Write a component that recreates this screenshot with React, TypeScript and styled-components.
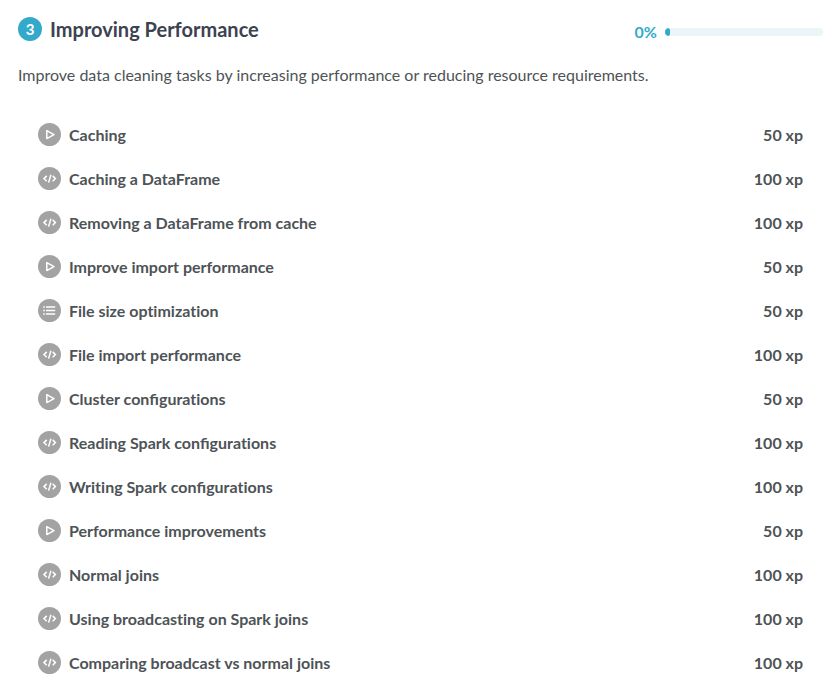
import React from "react";
import styled, { createGlobalStyle } from "styled-components";

const GlobalStyle = createGlobalStyle`
  * { box-sizing: border-box; }
  body { margin: 0; background: #fff; color: #4d5356; font-family: Lato, sans-serif; font-size: 16px; }
`;

const Chapter = styled.main`
  padding: 15px 16px 0 18px;
`;

const Header = styled.header`
  display: flex;
  justify-content: space-between;
  align-items: center;
  height: 28px;
`;

const Heading = styled.div`
  display: flex;
  align-items: center;
  gap: 8px;
`;

const ChapterNumber = styled.span`
  display: flex;
  align-items: center;
  justify-content: center;
  width: 24px;
  height: 24px;
  border-radius: 50%;
  background: #33aacc;
  color: #fff;
  font-size: 15px;
  font-weight: 700;
`;

const Title = styled.h1`
  margin: 0;
  font-size: 20px;
  line-height: 28px;
  font-weight: 700;
  color: #3d4251;
`;

const ProgressGroup = styled.div`
  display: flex;
  align-items: center;
  gap: 8px;
  padding-top: 6px;
`;

const ProgressLabel = styled.label`
  color: #33aacc;
  font-weight: 700;
  line-height: 24px;
`;

const ProgressBar = styled.progress`
  appearance: none;
  display: block;
  width: 158px;
  height: 8px;
  border: 0;
  border-radius: 4px;
  overflow: hidden;
  &::-webkit-progress-bar { background: #ebf4f7; }
  &::-webkit-progress-value { background: #33aacc; border-radius: 4px; }
`;

const Description = styled.p`
  margin: 20px 0 0;
  line-height: 24px;
`;

const ExerciseList = styled.ul`
  list-style: none;
  margin: 25px 0 0;
  padding: 0 20px;
`;

const Exercise = styled.li`
  display: flex;
  align-items: center;
  justify-content: space-between;
  height: 44px;
  font-weight: 700;
`;

const ExerciseLink = styled.a`
  display: flex;
  align-items: center;
  gap: 8px;
  color: inherit;
  text-decoration: none;
`;

const ExerciseTitle = styled.span`
  font-variant-ligatures: none;
`;

const Ligature = styled.span`
  font-variant-ligatures: common-ligatures;
`;

const Badge = styled.svg`
  display: block;
  width: 23px;
  height: 23px;
`;

const Points = styled.span`
  white-space: nowrap;
`;

type Kind = "video" | "code" | "quiz";

const KindIcon = ({ kind }: { kind: Kind }) => (
  <Badge viewBox="0 0 23 23" fill="none" stroke="#fff" aria-hidden="true">
    <circle cx="11.5" cy="11.5" r="11.5" fill="#a3a3a3" stroke="none" />
    {kind === "video" && <path d="M8.8 7.6v8l7.2-4z" strokeWidth="1.5" strokeLinejoin="round" />}
    {kind === "code" && (
      <path d="M8.7 8.9L6 11.6l2.7 2.7M14.7 8.9l2.7 2.7-2.7 2.7M12.9 7.8l-2.3 7.8" strokeWidth="1.5" />
    )}
    {kind === "quiz" && (
      <path d="M5.2 8h1.6M5.2 11.5h1.6M5.2 15h1.6M8 8h9.2M8 11.5h9.2M8 15h9.2" strokeWidth="1.5" />
    )}
  </Badge>
);

const exercises: { title: string; kind: Kind; xp: number }[] = [
  { title: "Caching", kind: "video", xp: 50 },
  { title: "Caching a DataFrame", kind: "code", xp: 100 },
  { title: "Removing a DataFrame from cache", kind: "code", xp: 100 },
  { title: "Improve import performance", kind: "video", xp: 50 },
  { title: "File size optimization", kind: "quiz", xp: 50 },
  { title: "File import performance", kind: "code", xp: 100 },
  { title: "Cluster configurations", kind: "video", xp: 50 },
  { title: "Reading Spark configurations", kind: "code", xp: 100 },
  { title: "Writing Spark configurations", kind: "code", xp: 100 },
  { title: "Performance improvements", kind: "video", xp: 50 },
  { title: "Normal joins", kind: "code", xp: 100 },
  { title: "Using broadcasting on Spark joins", kind: "code", xp: 100 },
  { title: "Comparing broadcast vs normal joins", kind: "code", xp: 100 },
];

// Only the "fi" pair is joined; other pairs such as "ti" stay separate.
const withLigatures = (text: string) =>
  text.split(/(fi)/).map((part, i) => (part === "fi" ? <Ligature key={i}>{part}</Ligature> : part));

export default function App() {
  return (
    <Chapter>
      <GlobalStyle />
      <Header>
        <Heading>
          <ChapterNumber>3</ChapterNumber>
          <Title>Improving Performance</Title>
        </Heading>
        <ProgressGroup>
          <ProgressLabel htmlFor="progress">0%</ProgressLabel>
          <ProgressBar id="progress" max={100} value={3} />
        </ProgressGroup>
      </Header>
      <Description>
        Improve data cleaning tasks by increasing performance or reducing resource requirements.
      </Description>
      <ExerciseList>
        {exercises.map(({ title, kind, xp }) => (
          <Exercise key={title}>
            <ExerciseLink href="#">
              <KindIcon kind={kind} />
              <ExerciseTitle>{withLigatures(title)}</ExerciseTitle>
            </ExerciseLink>
            <Points>{xp} xp</Points>
          </Exercise>
        ))}
      </ExerciseList>
    </Chapter>
  );
}
